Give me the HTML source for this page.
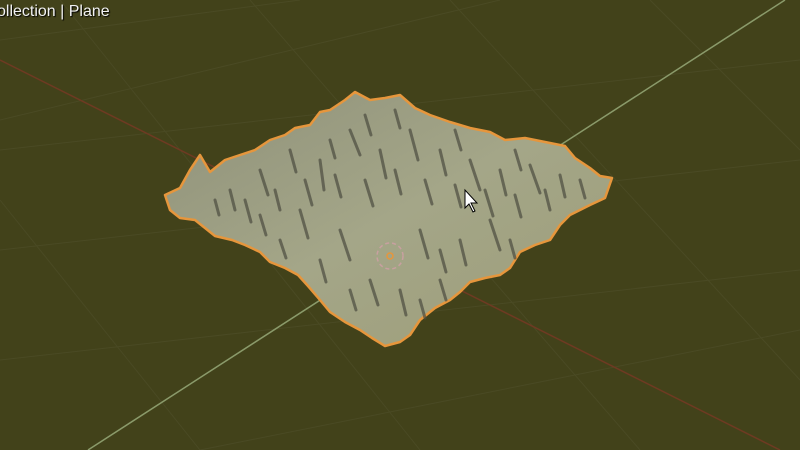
<!DOCTYPE html>
<html><head><meta charset="utf-8"><style>
html,body{margin:0;padding:0;background:#42421a;width:800px;height:450px;overflow:hidden}
.t{position:absolute;left:-3px;top:3px;color:#f2f2f2;font:16px "Liberation Sans",sans-serif;text-shadow:1px 1px 1px #000}
</style></head><body>
<svg width="800" height="450" style="position:absolute;left:0;top:0">
<defs>
<linearGradient id="g" x1="0" y1="0" x2="1" y2="1">
<stop offset="0" stop-color="#8f917a"/><stop offset="0.5" stop-color="#a4a688"/><stop offset="1" stop-color="#9d9d78"/>
</linearGradient>
</defs>
<g stroke="#4a4a24" stroke-width="1" fill="none">
<path d="M0 150 L800 60 M0 250 L800 160 M0 360 L800 270 M0 120 L500 0 M200 450 L800 330 M0 40 L300 0"/>
<path d="M60 0 L420 450 M250 0 L640 450 M450 0 L800 380 M0 200 L200 450 M650 0 L800 150"/>
</g>
<line x1="0" y1="60" x2="780" y2="450" stroke="#6e3a22" stroke-width="1.5"/>
<line x1="785" y1="0" x2="88" y2="450" stroke="#8a9a6a" stroke-width="1.5"/>
<polygon fill="url(#g)" stroke="#e6963c" stroke-width="2.5" stroke-linejoin="round" points="165,195 180,188 190,170 200,155 210,172 225,160 240,155 255,150 270,140 285,135 295,128 310,125 320,112 330,110 345,100 355,92 370,100 385,98 400,95 415,108 430,115 450,122 470,128 490,132 505,140 525,138 545,142 565,146 575,158 590,168 600,176 612,178 605,198 590,205 570,215 560,225 550,240 535,245 520,252 510,268 500,275 485,278 470,282 460,292 450,300 435,308 420,320 410,335 400,342 385,346 372,338 360,330 345,322 330,312 320,300 308,286 298,275 285,268 270,262 260,252 245,245 232,240 215,236 205,228 195,220 180,218 170,210"/>
<g stroke="#4c4c40" stroke-width="3" opacity="0.7" stroke-linecap="round">
<path d="M230 190 l5 20 M260 170 l8 25 M290 150 l6 22 M320 160 l4 30 M350 130 l10 25 M380 150 l6 28 M410 130 l8 30 M440 150 l6 25 M470 160 l10 30 M500 170 l6 25 M530 165 l10 28 M560 175 l5 22 M300 210 l8 28 M340 230 l10 30 M420 230 l8 28 M460 240 l6 25 M490 220 l10 30 M260 215 l6 20 M370 280 l8 25 M400 290 l6 25 M440 280 l6 20"/>
<path d="M215 200 l4 15 M245 200 l6 22 M275 190 l5 20 M305 180 l7 25 M335 175 l6 22 M365 180 l8 26 M395 170 l6 24 M425 180 l7 24 M455 185 l6 22 M485 190 l8 26 M515 195 l6 22 M545 190 l5 20 M580 180 l5 18 M330 140 l5 18 M365 115 l6 20 M395 110 l5 18 M455 130 l6 20 M515 150 l6 20 M280 240 l6 18 M320 260 l6 22 M440 250 l6 22 M510 240 l5 18 M350 290 l6 20 M420 300 l5 18"/>
</g>
<circle cx="390" cy="256" r="13" fill="none" stroke="#c8a0a0" stroke-width="1.5" stroke-dasharray="4 3"/>
<circle cx="390" cy="256" r="3" fill="none" stroke="#e6963c" stroke-width="1.5"/>
<path d="M465 190 L465 208 L469 204 L473 212 L475 211 L471 203 L477 203 Z" fill="#fff" stroke="#000" stroke-width="1"/>
</svg>
<div class="t">ollection | Plane</div>
</body></html>
